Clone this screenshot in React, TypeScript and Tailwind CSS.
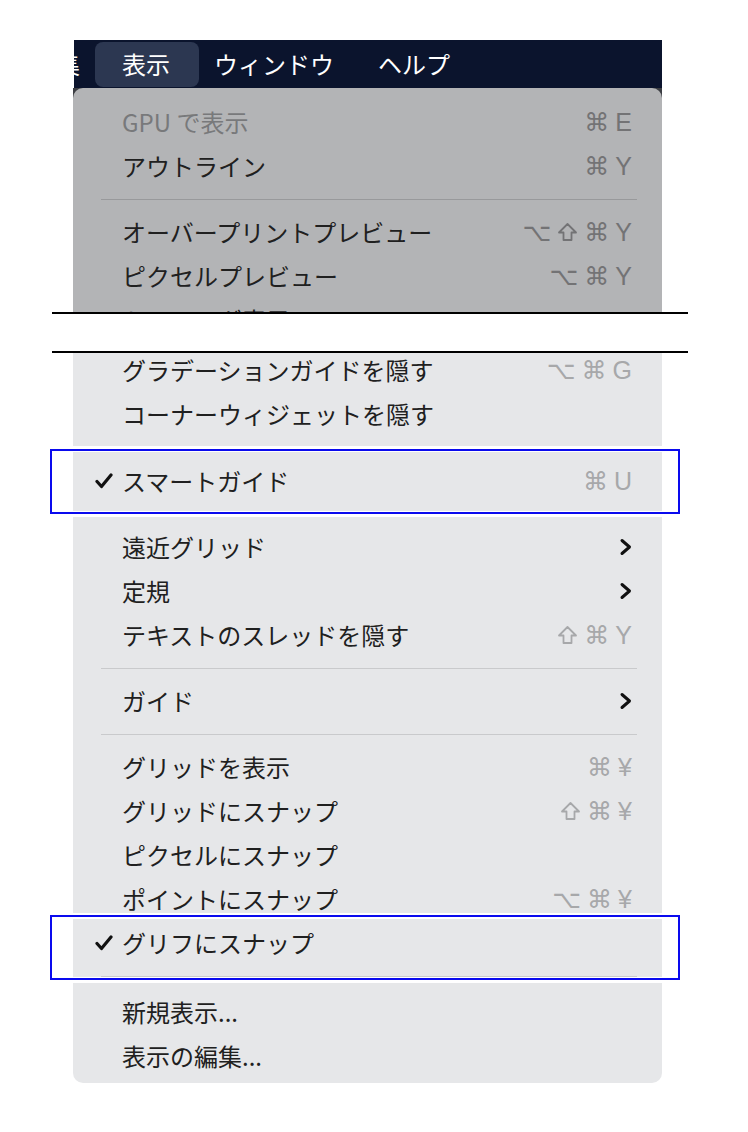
import React from "react";

// メニュー項目の型
type Item =
  | { label: string; keys?: string[]; sub?: boolean; checked?: boolean; disabled?: boolean }
  | "sep";
type Tone = "dark" | "light";

const CheckMark = () => (
  <svg width="18" height="16" viewBox="0 0 18 16" fill="none">
    <path d="M2 8.5L6.5 13.5L16 2" stroke="#111" strokeWidth="3.2" strokeLinecap="round" strokeLinejoin="round" />
  </svg>
);

const Chevron = () => (
  <svg width="13" height="18" viewBox="0 0 13 18" fill="none">
    <path d="M3 2.5L10.5 9L3 15.5" stroke="#111" strokeWidth="3" strokeLinecap="round" strokeLinejoin="round" />
  </svg>
);

// ⇧ キー（シフト）
const ShiftKey = () => (
  <svg width="21" height="20" viewBox="0 0 21 20" fill="none">
    <path d="M10.5 2L19 10.5H14.5V18H6.5V10.5H2Z" stroke="currentColor" strokeWidth="1.8" strokeLinejoin="round" />
  </svg>
);

const Separator = ({ tone }: { tone: Tone }) => (
  <div className="flex h-[22px] items-center pl-[28px] pr-[25px]">
    <div className={`h-px w-full ${tone === "dark" ? "bg-[#98999b]" : "bg-[#c9cacc]"}`} />
  </div>
);

const Row = ({ item, tone }: { item: Item; tone: Tone }) => {
  if (item === "sep") return <Separator tone={tone} />;
  const textColor = item.disabled ? "text-[#78797b]" : "text-[#202020]";
  const keyColor = tone === "dark" ? "text-[#737375]" : "text-[#a7a8aa]";
  return (
    <div className="flex h-[44px] items-center pl-[22px] pr-[30px]">
      <span className="flex w-[27px] items-center">{item.checked && <CheckMark />}</span>
      <span className={`flex-1 text-[24px] leading-none whitespace-nowrap ${textColor}`}>{item.label}</span>
      {item.sub && <Chevron />}
      {item.keys && (
        <span className={`flex items-center gap-[6px] font-['Liberation_Sans','DejaVu_Sans',sans-serif] text-[25px] leading-none ${keyColor}`}>
          {item.keys.map((k, i) => (k === "⇧" ? <ShiftKey key={i} /> : <span key={i}>{k}</span>))}
        </span>
      )}
    </div>
  );
};

const Rows = ({ items, tone }: { items: Item[]; tone: Tone }) => (
  <>
    {items.map((it, i) => (
      <Row key={i} item={it} tone={tone} />
    ))}
  </>
);

const topItems: Item[] = [
  { label: "GPU で表示", keys: ["⌘", "E"], disabled: true },
  { label: "アウトライン", keys: ["⌘", "Y"] },
  "sep",
  { label: "オーバープリントプレビュー", keys: ["⌥", "⇧", "⌘", "Y"] },
  { label: "ピクセルプレビュー", keys: ["⌥", "⌘", "Y"] },
  { label: "トリミング表示" },
];

const pieceA: Item[] = [
  { label: "グラデーションガイドを隠す", keys: ["⌥", "⌘", "G"] },
  { label: "コーナーウィジェットを隠す" },
  "sep",
];

const pieceC: Item[] = [
  { label: "遠近グリッド", sub: true },
  { label: "定規", sub: true },
  { label: "テキストのスレッドを隠す", keys: ["⇧", "⌘", "Y"] },
  "sep",
  { label: "ガイド", sub: true },
  "sep",
  { label: "グリッドを表示", keys: ["⌘", "¥"] },
  { label: "グリッドにスナップ", keys: ["⇧", "⌘", "¥"] },
  { label: "ピクセルにスナップ" },
  { label: "ポイントにスナップ", keys: ["⌥", "⌘", "¥"] },
];

const pieceE: Item[] = [{ label: "新規表示..." }, { label: "表示の編集..." }];

const CutLine = () => <div className="ml-[52px] h-[2px] w-[636px] bg-black" />;

const App: React.FC = () => {
  return (
    <div className="h-[1132px] w-[748px] overflow-hidden bg-white pt-10 font-['Noto_Sans_CJK_JP',sans-serif]">
      {/* メニューバー */}
      <div className="ml-[74px] flex h-12 w-[588px] items-center overflow-hidden bg-[#0b142d] text-[24px] leading-none text-white">
        <span className="-ml-[18px]">集</span>
        <span className="ml-[15px] flex h-[45px] items-center rounded-[8px] bg-[#2c3751] pl-[27px] pr-[29px]">表示</span>
        <span className="ml-[15px]">ウィンドウ</span>
        <span className="ml-[44px]">ヘルプ</span>
      </div>

      {/* 上部：暗いメニュー */}
      <div className="ml-[73px] w-[589px] bg-[#3c3e43]">
        <div className="h-[224px] overflow-hidden rounded-t-[10px] bg-[#b3b4b6] pt-3">
          <Rows items={topItems} tone="dark" />
        </div>
      </div>

      <CutLine />
      <div className="h-[37px]" />
      <CutLine />

      <div className="ml-[73px] h-[93px] w-[589px] overflow-hidden bg-[#e6e7e9]">
        <div className="-mt-[5px]">
          <Rows items={pieceA} tone="light" />
        </div>
      </div>

      <div className="h-[3px]" />
      <div className="ml-[50px] w-[630px] border-2 border-[#0a0aee] pt-[1px] pb-[1px] pl-[21px]">
        <div className="h-[59px] w-[589px] overflow-hidden bg-[#e6e7e9] pt-[7px]">
          <Row item={{ label: "スマートガイド", keys: ["⌘", "U"], checked: true }} tone="light" />
        </div>
      </div>
      <div className="h-[3px]" />

      <div className="ml-[73px] h-[396px] w-[589px] overflow-hidden bg-[#e6e7e9] pt-[8px]">
        <Rows items={pieceC} tone="light" />
      </div>

      <div className="h-[2px]" />
      <div className="ml-[50px] w-[630px] border-2 border-[#0a0aee] pt-[2px] pb-[1px] pl-[21px]">
        <div className="h-[58px] w-[589px] overflow-hidden bg-[#e6e7e9] pt-[2px]">
          <Row item={{ label: "グリフにスナップ", checked: true }} tone="light" />
          <Separator tone="light" />
        </div>
      </div>
      <div className="h-[3px]" />

      <div className="ml-[73px] h-[100px] w-[589px] overflow-hidden rounded-b-[10px] bg-[#e6e7e9] pt-[7px]">
        <Rows items={pieceE} tone="light" />
      </div>
    </div>
  );
};

export default App;
